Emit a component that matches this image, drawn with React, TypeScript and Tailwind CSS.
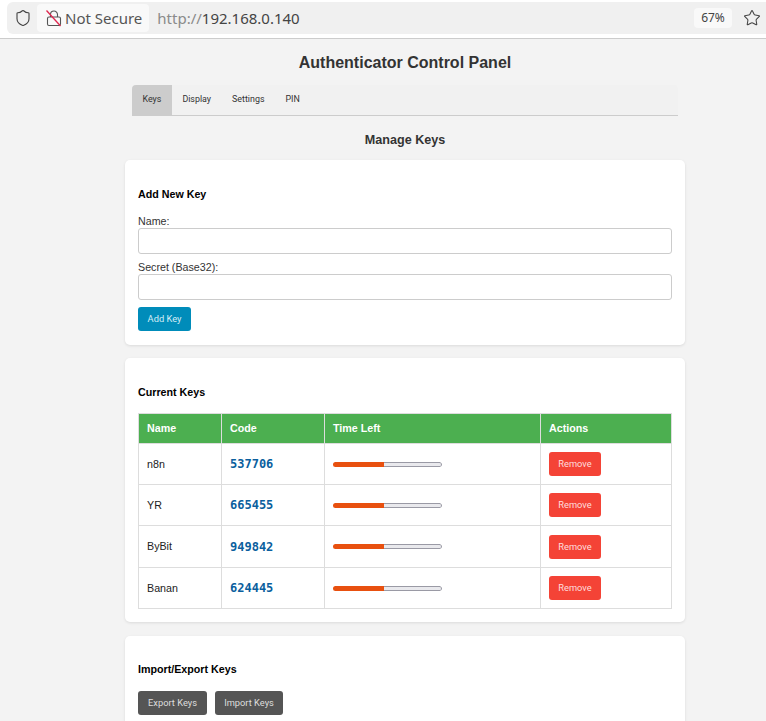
import { Shield, Star } from "lucide-react";

const tabs = ["Keys", "Display", "Settings", "PIN"];

const keys = [
  { name: "n8n", code: "537706", rowClass: "h-[41px]" },
  { name: "YR", code: "665455", rowClass: "h-[41px]" },
  { name: "ByBit", code: "949842", rowClass: "h-[42px]" },
  { name: "Banan", code: "624445", rowClass: "h-[41px]" },
];

const uiFont = "[font-family:'Noto_Sans',sans-serif]";
const smallFont = "[font-family:Roboto,sans-serif]";

function LockIcon() {
  return (
    <svg width="18" height="18" viewBox="0 0 18 18" fill="none" className="shrink-0">
      <path d="M5.5 8V5.5a3.5 3.5 0 0 1 7 0V8" stroke="#555" strokeWidth="1.1" />
      <rect x="2.5" y="8" width="13" height="8.5" rx="1.5" stroke="#555" strokeWidth="1.1" />
      <path d="M1.5 1.5 15.5 17" stroke="#e0274f" strokeWidth="1.3" />
    </svg>
  );
}

function Card({ title, className, children }: { title: string; className: string; children: React.ReactNode }) {
  return (
    <section className={`rounded-[5px] bg-white px-[13px] shadow-[0_1px_3px_rgba(0,0,0,0.1)] ${className}`}>
      <h3 className="text-[10.7px] font-bold leading-[13px] text-black">{title}</h3>
      {children}
    </section>
  );
}

function Field({ label }: { label: string }) {
  return (
    <div className="flex flex-col">
      <label className="text-[10.7px] leading-[13px] text-[#333]">{label}</label>
      <input className="h-[26px] w-full rounded-[3px] border border-[#ccc] bg-white" />
    </div>
  );
}

export default function App() {
  return (
    <div className="h-[721px] overflow-hidden bg-[#f3f3f3] [font-family:'Liberation_Sans',sans-serif]">
      <header className={`flex h-[39px] items-start border-b border-[#ccc] bg-white pt-[2px] pl-[7px] ${uiFont}`}>
        <div className="flex h-[32px] flex-1 items-center rounded-l-[6px] bg-[#f0f0f0] pr-[6px]">
          <Shield size={18} strokeWidth={1.5} className="ml-[7px] text-[#444]" />
          <div className="ml-[5px] flex h-[28px] items-center gap-[2px] rounded-[4px] bg-[#f9f9f9] pl-[8px] pr-[7px]">
            <LockIcon />
            <span className="text-[15px] text-[#555]">Not Secure</span>
          </div>
          <div className="ml-[8px] flex-1 text-[15px] text-[#444]">
            <span className="text-[#8a8a8a]">http://</span>192.168.0.140
          </div>
          <div className="flex h-[20px] w-[38px] items-center justify-center rounded-[4px] bg-[#f9f9f9] text-[12px] text-[#444]">
            67%
          </div>
          <Star size={18} strokeWidth={1.4} className="ml-[11px] mr-[-1px] text-[#444]" />
        </div>
      </header>

      <main className="ml-[125px] flex w-[560px] flex-col">
        <h1 className="mt-[15px] text-center text-[16px] font-bold leading-[18px] text-[#333]">
          Authenticator Control Panel
        </h1>

        <nav className={`mx-[7px] mt-[13px] flex h-[31px] rounded-t-[4px] border-b border-[#ccc] bg-[#f1f1f1] ${smallFont}`}>
          {tabs.map((tab, i) => (
            <div
              key={tab}
              className={`flex items-center px-[10.5px] text-[8.9px] text-[#333] ${i === 0 ? "rounded-tl-[4px] bg-[#ccc]" : ""}`}
            >
              {tab}
            </div>
          ))}
        </nav>

        <h2 className="mt-[17px] text-center text-[12.6px] font-bold leading-[14px] text-[#333]">Manage Keys</h2>

        <Card title="Add New Key" className="mt-[13px] h-[185px] pt-[28px]">
          <div className="mt-[14px] flex flex-col gap-[7px]">
            <Field label="Name:" />
            <Field label="Secret (Base32):" />
          </div>
          <button className={`mt-[7px] block h-[24px] w-[53px] rounded-[3px] bg-[#008cba] text-[9.3px] text-[#d5eef7] ${smallFont}`}>
            Add Key
          </button>
        </Card>

        <Card title="Current Keys" className="mt-[13px] h-[264px] pt-[28px]">
          <table className="mt-[14px] w-[534px] table-fixed border-collapse text-[10.7px] text-[#222]">
            <colgroup>
              <col className="w-[83px]" />
              <col className="w-[103px]" />
              <col className="w-[216px]" />
              <col />
            </colgroup>
            <thead>
              <tr className="h-[30px] bg-[#4caf50] text-left text-white">
                {["Name", "Code", "Time Left", "Actions"].map((h) => (
                  <th key={h} className="border border-[#ddd] px-[8px] font-bold">
                    {h}
                  </th>
                ))}
              </tr>
            </thead>
            <tbody>
              {keys.map((k) => (
                <tr key={k.name} className={k.rowClass}>
                  <td className="border border-[#ddd] px-[8px]">{k.name}</td>
                  <td className="border border-[#ddd] px-[8px] text-[12px] font-bold text-[#0b5f9e] [font-family:'DejaVu_Sans_Mono',monospace]">
                    {k.code}
                  </td>
                  <td className="border border-[#ddd] px-[8px]">
                    <div className="flex h-[5px] w-[109px] overflow-hidden rounded-[3px]">
                      <div className="w-[51px] bg-[#e8500f]" />
                      <div className="flex-1 rounded-r-[3px] border border-l-0 border-[#9a9aa5] bg-[#e9e9ed]" />
                    </div>
                  </td>
                  <td className="border border-[#ddd] px-[8px]">
                    <button className={`block h-[24px] w-[52px] rounded-[3px] bg-[#f44336] text-[9.3px] text-[#fdd] ${smallFont}`}>
                      Remove
                    </button>
                  </td>
                </tr>
              ))}
            </tbody>
          </table>
        </Card>

        <Card title="Import/Export Keys" className="mt-[14px] h-[120px] pt-[27px]">
          <div className={`mt-[15px] flex gap-[8px] ${smallFont}`}>
            <button className="h-[24px] w-[69px] rounded-[3px] bg-[#555] text-[9.3px] text-[#ddd]">Export Keys</button>
            <button className="h-[24px] w-[68px] rounded-[3px] bg-[#555] text-[9.3px] text-[#ddd]">Import Keys</button>
          </div>
        </Card>
      </main>
    </div>
  );
}
